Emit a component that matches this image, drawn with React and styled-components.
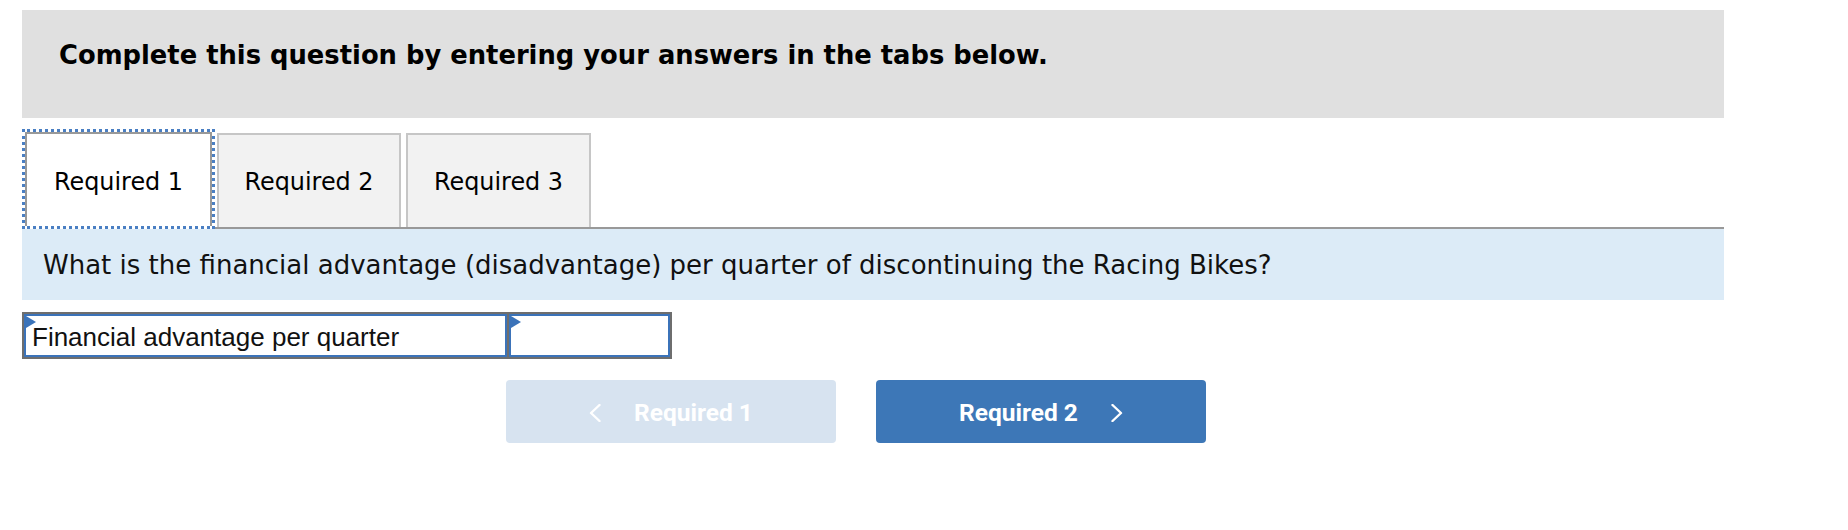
import styled, { createGlobalStyle } from "styled-components";

const GlobalStyle = createGlobalStyle`
  html, body {
    margin: 0;
    padding: 0;
    background: #ffffff;
  }
  body {
    font-family: "DejaVu Sans", Verdana, sans-serif;
    color: #000;
  }
`;

const Page = styled.div`
  width: 1702px;
  padding: 10px 0 0 22px;
`;

const Banner = styled.div`
  height: 108px;
  box-sizing: border-box;
  padding: 30px 0 0 37px;
  background: #e0e0e0;
  font-weight: 700;
  font-size: 25.8px;
  line-height: 1.2;
`;

const TabBar = styled.div`
  display: flex;
  align-items: flex-end;
  margin-top: 11px;
  border-bottom: 2px solid #999999;
`;

const Tab = styled.div`
  display: flex;
  align-items: center;
  justify-content: center;
  box-sizing: border-box;
  font-size: 23.9px;
  color: #000;
  ${(p) =>
    p.$active
      ? `
    width: 193px;
    height: 100px;
    margin: 0 2px -2px 0;
    padding-top: 6px;
    background: #ffffff;
    border: 3px dotted #4a7fc3;
    box-shadow: inset 2px 2px 0 #999999, inset -2px 0 0 #999999;
  `
      : `
    width: ${p.$w}px;
    height: 94px;
    margin-right: 5px;
    padding-top: 2px;
    background: #f2f2f2;
    border: 2px solid #c6c6c6;
    border-bottom: none;
  `}
`;

const Question = styled.div`
  display: flex;
  align-items: center;
  height: 71px;
  padding-left: 21px;
  background: #dcebf7;
  font-size: 26px;
  color: #111;
`;

const AnswerTable = styled.div`
  display: flex;
  gap: 2px;
  width: 650px;
  box-sizing: border-box;
  margin-top: 12px;
  padding: 2px;
  background: #6e6e6e;
`;

const Cell = styled.div`
  position: relative;
  display: flex;
  align-items: center;
  box-sizing: border-box;
  width: ${(p) => p.$w}px;
  height: 43px;
  padding: 3px 0 0 6px;
  background: #ffffff;
  border: 2px solid #3b73b9;
  font-family: "Liberation Sans", Arial, sans-serif;
  font-size: 26px;
  color: #111;
`;

const Marker = styled.span`
  position: absolute;
  left: 0;
  top: 0;
  width: 0;
  height: 0;
  border-top: 6px solid transparent;
  border-bottom: 6px solid transparent;
  border-left: 10px solid #3b73b9;
`;

const NavRow = styled.div`
  display: flex;
  gap: 40px;
  margin: 21px 0 0 484px;
`;

const NavButton = styled.button`
  display: flex;
  align-items: center;
  justify-content: center;
  gap: 33px;
  width: 330px;
  height: 63px;
  border: none;
  border-radius: 4px;
  padding: 2px 0 0;
  background: ${(p) => (p.$disabled ? "#d7e3f0" : "#3d77b7")};
  color: #ffffff;
  font-family: Roboto, "Liberation Sans", sans-serif;
  font-weight: 700;
  font-size: 24.5px;
  cursor: ${(p) => (p.$disabled ? "default" : "pointer")};
`;

const Chevron = ({ dir }) => (
  <svg width="12" height="18" viewBox="0 0 12 18" fill="none">
    <polyline
      points={dir === "left" ? "10.5,1 2,9 10.5,17" : "1.5,1 10,9 1.5,17"}
      stroke="#ffffff"
      strokeWidth="2.4"
      strokeLinecap="round"
      strokeLinejoin="round"
    />
  </svg>
);

export default function App() {
  const tabs = ["Required 1", "Required 2", "Required 3"];
  return (
    <>
      <GlobalStyle />
      <Page>
        <Banner>Complete this question by entering your answers in the tabs below.</Banner>
        <TabBar>
          {tabs.map((t, i) => (
            <Tab key={t} $active={i === 0} $w={i === 1 ? 184 : 185}>
              {t}
            </Tab>
          ))}
        </TabBar>
        <Question>
          What is the financial advantage (disadvantage) per quarter of discontinuing the Racing Bikes?
        </Question>
        <AnswerTable>
          <Cell $w={483}>
            <Marker />
            Financial advantage per quarter
          </Cell>
          <Cell $w={161}>
            <Marker />
          </Cell>
        </AnswerTable>
        <NavRow>
          <NavButton $disabled>
            <Chevron dir="left" />
            Required 1
          </NavButton>
          <NavButton>
            Required 2
            <Chevron dir="right" />
          </NavButton>
        </NavRow>
      </Page>
    </>
  );
}
